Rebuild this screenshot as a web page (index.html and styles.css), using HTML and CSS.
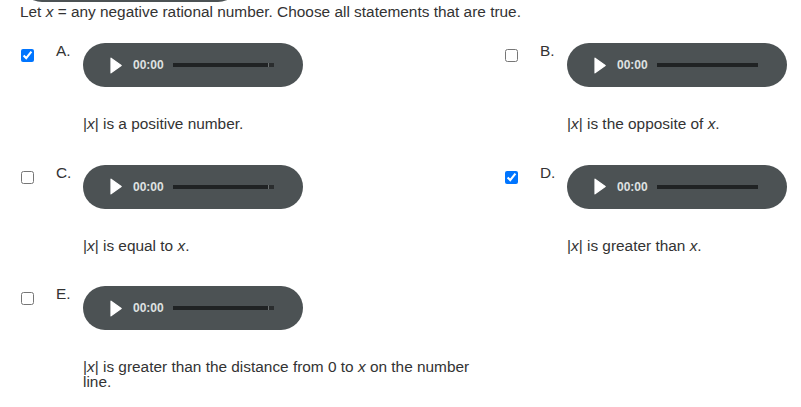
FILE: index.html
```html
<!DOCTYPE html>
<html lang="en">
<head>
<meta charset="utf-8">
<title>Question</title>
<link rel="stylesheet" href="styles.css">
</head>
<body>
<div class="page">
  <div class="player player-cut"></div>
  <p class="question">Let <i>x</i> = any negative rational number. Choose all statements that are true.</p>
  <div class="options">
    <div class="opt">
      <div class="box"><input type="checkbox" checked></div>
      <span class="letter">A.</span>
      <div class="body">
        <div class="player">
          <svg class="play" width="12" height="17" viewBox="0 0 12 17"><path d="M1 1.2 L11.2 8.5 L1 15.8 Z" fill="#fff" stroke="#fff" stroke-width="1.2" stroke-linejoin="round"/></svg>
          <span class="time">00:00</span>
          <span class="track"><span class="knob"></span></span>
        </div>
        <p class="stmt">|<i>x</i>| is a positive number.</p>
      </div>
    </div>
    <div class="opt">
      <div class="box"><input type="checkbox"></div>
      <span class="letter">B.</span>
      <div class="body">
        <div class="player">
          <svg class="play" width="12" height="17" viewBox="0 0 12 17"><path d="M1 1.2 L11.2 8.5 L1 15.8 Z" fill="#fff" stroke="#fff" stroke-width="1.2" stroke-linejoin="round"/></svg>
          <span class="time">00:00</span>
          <span class="track"></span>
        </div>
        <p class="stmt">|<i>x</i>| is the opposite of <i>x</i>.</p>
      </div>
    </div>
    <div class="opt">
      <div class="box"><input type="checkbox"></div>
      <span class="letter">C.</span>
      <div class="body">
        <div class="player">
          <svg class="play" width="12" height="17" viewBox="0 0 12 17"><path d="M1 1.2 L11.2 8.5 L1 15.8 Z" fill="#fff" stroke="#fff" stroke-width="1.2" stroke-linejoin="round"/></svg>
          <span class="time">00:00</span>
          <span class="track"><span class="knob"></span></span>
        </div>
        <p class="stmt">|<i>x</i>| is equal to <i>x</i>.</p>
      </div>
    </div>
    <div class="opt">
      <div class="box"><input type="checkbox" checked></div>
      <span class="letter">D.</span>
      <div class="body">
        <div class="player">
          <svg class="play" width="12" height="17" viewBox="0 0 12 17"><path d="M1 1.2 L11.2 8.5 L1 15.8 Z" fill="#fff" stroke="#fff" stroke-width="1.2" stroke-linejoin="round"/></svg>
          <span class="time">00:00</span>
          <span class="track"></span>
        </div>
        <p class="stmt">|<i>x</i>| is greater than <i>x</i>.</p>
      </div>
    </div>
    <div class="opt">
      <div class="box"><input type="checkbox"></div>
      <span class="letter">E.</span>
      <div class="body">
        <div class="player">
          <svg class="play" width="12" height="17" viewBox="0 0 12 17"><path d="M1 1.2 L11.2 8.5 L1 15.8 Z" fill="#fff" stroke="#fff" stroke-width="1.2" stroke-linejoin="round"/></svg>
          <span class="time">00:00</span>
          <span class="track"><span class="knob"></span></span>
        </div>
        <p class="stmt">|<i>x</i>| is greater than the distance from 0 to <i>x</i> on the number line.</p>
      </div>
    </div>
  </div>
</div>
</body>
</html>
```

FILE: styles.css
```css
html, body {
  margin: 0;
  padding: 0;
  background: #fff;
}
body {
  font-family: "Liberation Sans", Arial, sans-serif;
  font-size: 15.4px;
  line-height: 15px;
  color: #333;
  overflow: hidden;
}
.page {
  padding: 0 20px;
}
.player {
  box-sizing: border-box;
  width: 220px;
  height: 44px;
  border-radius: 22px;
  background: #4c5254;
  display: flex;
  align-items: center;
  padding-left: 27px;
}
.player-cut {
  margin-top: -42px;
}
.question {
  margin: 2px 0 0 0;
}
.options {
  display: grid;
  grid-template-columns: 484px 1fr;
  row-gap: 33.5px;
  margin-top: 24px;
}
.opt {
  display: flex;
  align-items: flex-start;
}
.box {
  width: 36px;
  flex: none;
}
.box input {
  margin: 6px 0 0 1px;
  width: 13px;
  height: 13px;
  display: block;
}
.letter {
  width: 27px;
  flex: none;
}
.body {
  width: 392px;
}
.play {
  display: block;
  flex: none;
}
.time {
  margin-left: 11px;
  font-family: "Liberation Sans", Arial, sans-serif;
  font-weight: bold;
  font-size: 12px;
  line-height: 14px;
  color: #dfe1e1;
}
.track {
  position: relative;
  margin-left: 9px;
  width: 101px;
  height: 4px;
  background: #202324;
}
.knob {
  position: absolute;
  right: 0;
  top: 0;
  width: 6px;
  height: 4px;
  background: #2a2d2e;
  border-left: 1px solid #6a6f70;
  box-sizing: border-box;
}
.stmt {
  margin: 29px 0 0 0;
}
```
